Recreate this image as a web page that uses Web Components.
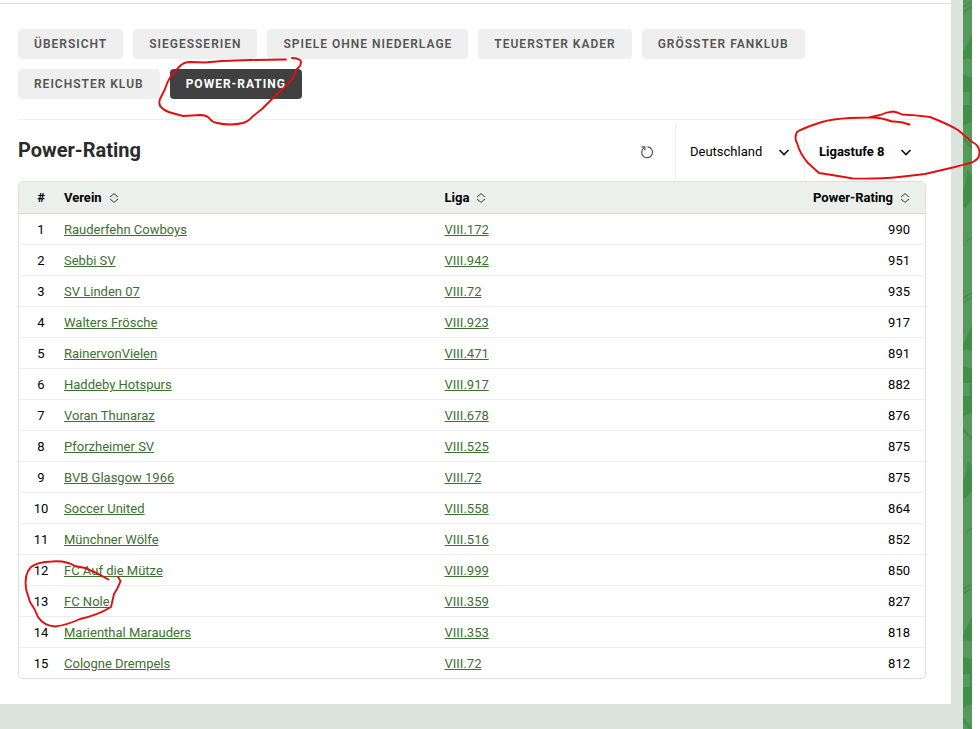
<!DOCTYPE html>
<html lang="de">
<head>
  <meta charset="utf-8">
  <meta name="viewport" content="width=device-width, initial-scale=1">
  <title>Power-Rating</title>
  <style>
    body {
      margin: 0;
      background: #fff;
      color: #000;
      font-family: Roboto, "Liberation Sans", sans-serif;
      font-size: 13px;
      line-height: 20px;
    }
  </style>
</head>
<body>
  <page-frame>
    <tab-list>
      <tab-link>Übersicht</tab-link>
      <tab-link>Siegesserien</tab-link>
      <tab-link>Spiele ohne Niederlage</tab-link>
      <tab-link>Teuerster Kader</tab-link>
      <tab-link>Grösster Fanklub</tab-link>
      <tab-link>Reichster Klub</tab-link>
      <tab-link active>Power-Rating</tab-link>
    </tab-list>
    <title-bar>
      Power-Rating
      <reload-button slot="tools"></reload-button>
      <filter-select slot="tools" label="Land" value="Deutschland"></filter-select>
      <filter-select slot="tools" label="Ligastufe" value="Ligastufe 8" strong></filter-select>
    </title-bar>
    <rating-table></rating-table>
  </page-frame>
  <pen-marks></pen-marks>

  <script>
    class PageFrame extends HTMLElement {
      constructor() {
        super();
        this.shadowDOM = this.attachShadow({ mode: 'open' });
      }

      connectedCallback() {
        this.render();
      }

      render() {
        this.shadowDOM.innerHTML = `
          <style>
            :host {
              display: flex;
              min-height: 100vh;
              padding-right: 8px;
              box-sizing: border-box;
            }
            .frame {
              flex: 1;
              min-width: 0;
              padding-right: 12px;
              background: #dbe3dc;
            }
            main {
              padding: 3px 0 25px;
              background: #fff;
            }
            .content {
              padding: 25px 25px 0 18px;
              border-top: 1px solid #dcdcdc;
            }
            .lawn {
              width: 9px;
              background: #56995c;
            }
            .lawn svg {
              display: block;
              width: 100%;
              height: 100%;
            }
          </style>

          <div class="frame">
            <main>
              <div class="content"><slot></slot></div>
            </main>
          </div>
          <div class="lawn">
            <svg aria-hidden="true">
              <defs>
                <pattern id="lawn" width="9" height="291" patternUnits="userSpaceOnUse">
                  <rect width="9" height="291" fill="#56995c"/>
                  <g fill="#428f49">
                    <path d="M0 53 L9 34 V60 L4 58 L0 60Z"/>
                    <path d="M0 75 Q5 77 9 77 V98 H7 V92 H0Z"/>
                    <path d="M0 105 H7 V91 H9 V122 Q3 123 0 126Z"/>
                    <path d="M0 136 L9 146 V150 L0 140Z"/>
                    <path d="M4 170 Q8 172 9 178 V200 L2 208 L0 206 V190 Q4 182 4 170Z"/>
                  </g>
                  <path d="M0 7 L9 2 M0 12 L9 6 M4 241 L9 237" stroke="#428f49" stroke-width="1.5" fill="none"/>
                </pattern>
              </defs>
              <rect width="100%" height="100%" fill="url(#lawn)"/>
            </svg>
          </div>
        `;
      }
    }

    class TabList extends HTMLElement {
      constructor() {
        super();
        this.shadowDOM = this.attachShadow({ mode: 'open' });
      }

      connectedCallback() {
        this.render();
      }

      render() {
        this.shadowDOM.innerHTML = `
          <style>
            :host {
              display: block;
              padding-bottom: 20px;
              border-bottom: 1px solid #eee;
            }
            nav {
              display: flex;
              flex-wrap: wrap;
              gap: 10px;
            }
          </style>

          <nav aria-label="Ranglisten"><slot></slot></nav>
        `;
      }
    }

    class TabLink extends HTMLElement {
      constructor() {
        super();
        this.shadowDOM = this.attachShadow({ mode: 'open' });
      }

      connectedCallback() {
        this.render();
      }

      render() {
        const current = this.hasAttribute('active') ? 'aria-current="page"' : '';
        this.shadowDOM.innerHTML = `
          <style>
            :host {
              display: block;
            }
            a {
              display: block;
              padding: 0 16px;
              border-radius: 4px;
              background: #efefef;
              color: #555;
              font-size: 12px;
              font-weight: 600;
              line-height: 30px;
              letter-spacing: 1px;
              text-decoration: none;
              text-transform: uppercase;
            }
            a[aria-current] {
              background: #404040;
              color: #fff;
              font-weight: 700;
            }
          </style>

          <a href="#" ${current}><slot></slot></a>
        `;
      }
    }

    class TitleBar extends HTMLElement {
      constructor() {
        super();
        this.shadowDOM = this.attachShadow({ mode: 'open' });
      }

      connectedCallback() {
        this.render();
      }

      render() {
        this.shadowDOM.innerHTML = `
          <style>
            :host {
              display: flex;
              align-items: center;
              justify-content: space-between;
              padding: 4px 0 2px;
            }
            h1 {
              margin: 0 0 4px;
              color: #2b2b2b;
              font-size: 20px;
              font-weight: 700;
              line-height: 24px;
            }
            .tools {
              display: flex;
              align-items: center;
            }
          </style>

          <h1><slot></slot></h1>
          <div class="tools"><slot name="tools"></slot></div>
        `;
      }
    }

    class ReloadButton extends HTMLElement {
      constructor() {
        super();
        this.shadowDOM = this.attachShadow({ mode: 'open' });
      }

      connectedCallback() {
        this.render();
      }

      render() {
        this.shadowDOM.innerHTML = `
          <style>
            :host {
              display: block;
              margin-right: 20px;
            }
            button {
              display: block;
              padding: 0;
              border: 0;
              background: none;
              cursor: pointer;
            }
            svg {
              display: block;
            }
          </style>

          <button type="button" aria-label="Neu laden">
            <svg width="16" height="16" viewBox="0 0 16 16" fill="none" stroke="#555" stroke-width="1.2">
              <path d="M8.5 2.9 A5.4 5.4 0 1 1 5.4 3.6"/>
              <path d="M2.4 2.9 H5.9 V6.4"/>
            </svg>
          </button>
        `;
      }
    }

    class FilterSelect extends HTMLElement {
      constructor() {
        super();
        this.shadowDOM = this.attachShadow({ mode: 'open' });
      }

      connectedCallback() {
        this.render();
      }

      render() {
        const value = this.getAttribute('value');
        this.shadowDOM.innerHTML = `
          <style>
            :host {
              display: grid;
              align-items: center;
              border-left: 1px solid #eee;
            }
            select, svg {
              grid-area: 1 / 1;
            }
            select {
              appearance: none;
              height: 55px;
              margin: 0;
              padding: 0 41px 0 14px;
              border: 0;
              background: none;
              color: #000;
              font: inherit;
            }
            svg {
              justify-self: end;
              margin-right: 14px;
              pointer-events: none;
            }
            :host([strong]) select {
              font-weight: 700;
            }
          </style>

          <select aria-label="${this.getAttribute('label')}">
            <option>${value}</option>
          </select>
          <svg width="12" height="12" viewBox="0 0 12 12" fill="none" stroke="#111" stroke-width="1.6">
            <path d="M1.5 4 L6 8.5 L10.5 4"/>
          </svg>
        `;
      }
    }

    class SortButton extends HTMLElement {
      constructor() {
        super();
        this.shadowDOM = this.attachShadow({ mode: 'open' });
      }

      connectedCallback() {
        this.render();
      }

      render() {
        this.shadowDOM.innerHTML = `
          <style>
            :host {
              display: inline-block;
              vertical-align: top;
            }
            button {
              display: flex;
              align-items: center;
              gap: 7px;
              padding: 0;
              border: 0;
              background: none;
              color: inherit;
              font: inherit;
              white-space: nowrap;
              cursor: pointer;
            }
          </style>

          <button type="button">
            <slot></slot>
            <svg width="10" height="10" viewBox="0 0 10 10" fill="none" stroke="#333" stroke-width="1">
              <path d="M1 4 L5 0.6 L9 4 M1 6 L5 9.4 L9 6"/>
            </svg>
          </button>
        `;
      }
    }

    const clubs = [
      ['Rauderfehn Cowboys', 'VIII.172', 990],
      ['Sebbi SV', 'VIII.942', 951],
      ['SV Linden 07', 'VIII.72', 935],
      ['Walters Frösche', 'VIII.923', 917],
      ['RainervonVielen', 'VIII.471', 891],
      ['Haddeby Hotspurs', 'VIII.917', 882],
      ['Voran Thunaraz', 'VIII.678', 876],
      ['Pforzheimer SV', 'VIII.525', 875],
      ['BVB Glasgow 1966', 'VIII.72', 875],
      ['Soccer United', 'VIII.558', 864],
      ['Münchner Wölfe', 'VIII.516', 852],
      ['FC Auf die Mütze', 'VIII.999', 850],
      ['FC Nole', 'VIII.359', 827],
      ['Marienthal Marauders', 'VIII.353', 818],
      ['Cologne Drempels', 'VIII.72', 812],
    ];

    class RatingTable extends HTMLElement {
      constructor() {
        super();
        this.shadowDOM = this.attachShadow({ mode: 'open' });
      }

      connectedCallback() {
        this.render();
      }

      render() {
        const rows = clubs.map(([club, league, rating], i) => `
          <tr>
            <td>${i + 1}</td>
            <td><a href="#">${club}</a></td>
            <td><a href="#">${league}</a></td>
            <td>${rating}</td>
          </tr>`).join('');

        this.shadowDOM.innerHTML = `
          <style>
            :host {
              display: block;
              overflow: hidden;
              border: 1px solid #dbe0dc;
              border-radius: 5px;
            }
            table {
              width: 100%;
              border-collapse: separate;
              border-spacing: 0;
              table-layout: fixed;
            }
            th, td {
              padding: 6px 15px 4px;
              text-align: left;
              border-bottom: 1px solid #eee;
            }
            th {
              padding-bottom: 5px;
              background: #ebf0ec;
              border-bottom-color: #d5dcd6;
              font-weight: 700;
            }
            tr > :first-child {
              width: 30px;
              box-sizing: border-box;
              padding-left: 14px;
              padding-right: 0;
              text-align: center;
            }
            th:nth-child(2) {
              width: 42%;
              box-sizing: border-box;
            }
            th:nth-child(3) {
              width: 36%;
              box-sizing: border-box;
            }
            tr > :last-child {
              text-align: right;
            }
            tbody tr:last-child td {
              border-bottom: 0;
            }
            a {
              color: #3c7030;
            }
          </style>

          <table>
            <thead>
              <tr>
                <th scope="col">#</th>
                <th scope="col"><sort-button>Verein</sort-button></th>
                <th scope="col"><sort-button>Liga</sort-button></th>
                <th scope="col"><sort-button>Power-Rating</sort-button></th>
              </tr>
            </thead>
            <tbody>${rows}</tbody>
          </table>
        `;
      }
    }

    // Hand-drawn circles lying over the page
    class PenMarks extends HTMLElement {
      constructor() {
        super();
        this.shadowDOM = this.attachShadow({ mode: 'open' });
      }

      connectedCallback() {
        this.render();
      }

      render() {
        this.shadowDOM.innerHTML = `
          <style>
            :host {
              position: absolute;
              top: 0;
              left: 0;
              pointer-events: none;
            }
            svg {
              display: block;
            }
          </style>

          <svg width="980" height="729" viewBox="0 0 980 729" fill="none" stroke="#e01010" stroke-width="1.9" stroke-linecap="round" stroke-linejoin="round" aria-hidden="true">
            <path d="M286 59.5 L250 60 L222 61 L205 62.5 L190 62 Q184 62 180 66 L171 76 Q167 82 165 89 L160 99 Q158 105 162 108 Q165 111 172 113 L183 116 L200 115 Q207 115 210 119 Q212 122 217 123 Q230 126 243 123 Q249 121 252 117 L262 109 L276 95 L288 84 Q293 79 295 73 Q296 69 300 66 Q302 61 300 60 Q297 58 292 58"/>
            <path d="M909.5 124.5 Q900 121 892 121.5 Q880 117 869 117.5 L850 118 Q832 119 822 122 Q803 128 797 132 Q794 138 797 143 Q800 154 808 163 L819 173 L832 175 L853 178.5 Q880 179 899 177 L925 174 L955 167 L970 163 Q980 160 979.5 152 Q979 145 972 142 Q965 136 958 130 Q948 124 930 117 Q915 115 902 114.5 Q897 112 893 111.5 Q887 112 880 115 L869 117.5"/>
            <path d="M108.5 579.5 Q98 573 85 568 L75 566 Q65 560 52 561.5 Q37 562 31 567 Q24 574 26 589 L30 602 Q35 609 38 617 Q44 626 55 626.5 Q67 625 80 619 Q98 615 111 607 L114 594 Q119 586 120.5 581 L118 577"/>
          </svg>
        `;
      }
    }

    customElements.define('page-frame', PageFrame);
    customElements.define('tab-list', TabList);
    customElements.define('tab-link', TabLink);
    customElements.define('title-bar', TitleBar);
    customElements.define('reload-button', ReloadButton);
    customElements.define('filter-select', FilterSelect);
    customElements.define('sort-button', SortButton);
    customElements.define('rating-table', RatingTable);
    customElements.define('pen-marks', PenMarks);
  </script>
</body>
</html>
